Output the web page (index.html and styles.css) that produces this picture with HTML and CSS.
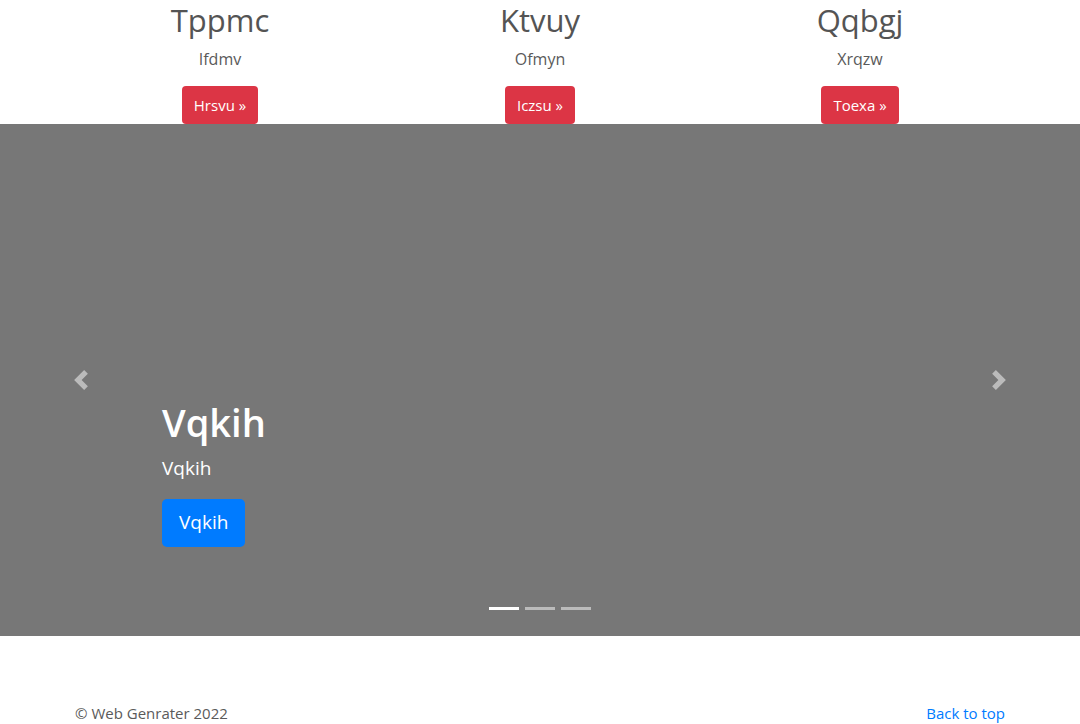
FILE: index.html
```html
<!DOCTYPE html>
<html lang="en">
<head>
<meta charset="utf-8">
<title>Carousel</title>
<link rel="stylesheet" href="styles.css">
</head>
<body>
<main>
  <div class="container marketing">
    <div class="row">
      <div class="col">
        <h2>Tppmc</h2>
        <p>Ifdmv</p>
        <a class="btn btn-danger" href="#">Hrsvu &raquo;</a>
      </div>
      <div class="col">
        <h2>Ktvuy</h2>
        <p>Ofmyn</p>
        <a class="btn btn-danger" href="#">Iczsu &raquo;</a>
      </div>
      <div class="col">
        <h2>Qqbgj</h2>
        <p>Xrqzw</p>
        <a class="btn btn-danger" href="#">Toexa &raquo;</a>
      </div>
    </div>
  </div>

  <section class="carousel">
    <a class="control control-prev" href="#">
      <svg viewBox="0 0 8 8" width="20" height="20"><path fill="#fff" d="M5.25 0l-4 4 4 4 1.5-1.5L4.25 4l2.5-2.5L5.25 0z"/></svg>
    </a>
    <div class="caption">
      <h1>Vqkih</h1>
      <p>Vqkih</p>
      <a class="btn btn-lg btn-primary" href="#">Vqkih</a>
    </div>
    <a class="control control-next" href="#">
      <svg viewBox="0 0 8 8" width="20" height="20"><path fill="#fff" d="M2.75 0l-1.5 1.5L3.75 4l-2.5 2.5L2.75 8l4-4-4-4z"/></svg>
    </a>
    <ol class="indicators">
      <li class="active"></li>
      <li></li>
      <li></li>
    </ol>
  </section>

  <footer class="container footer">
    <p>&copy; Web Genrater 2022</p>
    <p><a href="#">Back to top</a></p>
  </footer>
</main>
</body>
</html>
```

FILE: styles.css
```css
* { box-sizing: border-box; }

html, body {
  margin: 0;
  padding: 0;
}

body {
  font-family: "Open Sans", "Noto Sans", "Liberation Sans", sans-serif;
  font-size: 16px;
  line-height: 1.5;
  color: #5a5a5a;
  background: #fff;
}

a { text-decoration: none; }

.container {
  width: 960px;
  margin: 0 auto;
  padding: 0 15px;
}

.marketing {
  padding-top: 1px;
}

.marketing .row {
  display: flex;
  margin: 0 -15px;
}

.marketing .col {
  flex: 1 1 0;
  padding: 0 15px;
  text-align: center;
}

.marketing h2 {
  margin: 0 0 8px;
  font-size: 31px;
  font-weight: 500;
  line-height: 38px;
  color: #545454;
}

.marketing p {
  margin: 0 12px 15px;
}

.btn {
  display: inline-block;
  font-size: 15px;
  line-height: 24px;
  padding: 7px 12px;
  border-radius: 4px;
  color: #fff;
  vertical-align: top;
}

.btn-danger { background: #dc3545; }

.btn-primary { background: #007bff; }

.btn-lg {
  font-size: 19px;
  line-height: 29px;
  padding: 9px 17px 10px;
  border-radius: 5px;
}

.carousel {
  position: relative;
  height: 512px;
  background: #777;
  display: flex;
  align-items: center;
}

.control {
  width: 162px;
  height: 100%;
  display: flex;
  align-items: center;
  justify-content: center;
  opacity: .5;
  flex: none;
}

.control svg { display: block; }

.caption {
  flex: 1;
  align-self: flex-end;
  padding-bottom: 89px;
  color: #fff;
}

.caption h1 {
  margin: 0 0 8px;
  font-size: 38px;
  font-weight: 600;
  line-height: 48px;
}

.caption p {
  margin: 0 0 17px;
  font-size: 19px;
  font-weight: 500;
  line-height: 28px;
}

.indicators {
  position: absolute;
  left: 0;
  right: 0;
  bottom: 16px;
  margin: 0;
  padding: 0;
  list-style: none;
  display: flex;
  justify-content: center;
}

.indicators li {
  width: 30px;
  height: 3px;
  margin: 0 3px 10px;
  background: #fff;
  opacity: .5;
}

.indicators li.active { opacity: 1; }

.footer {
  display: flex;
  justify-content: space-between;
  padding-top: 66px;
}

.footer p {
  margin: 0 0 16px;
  font-size: 15px;
}

.footer a { color: #007bff; }
```
